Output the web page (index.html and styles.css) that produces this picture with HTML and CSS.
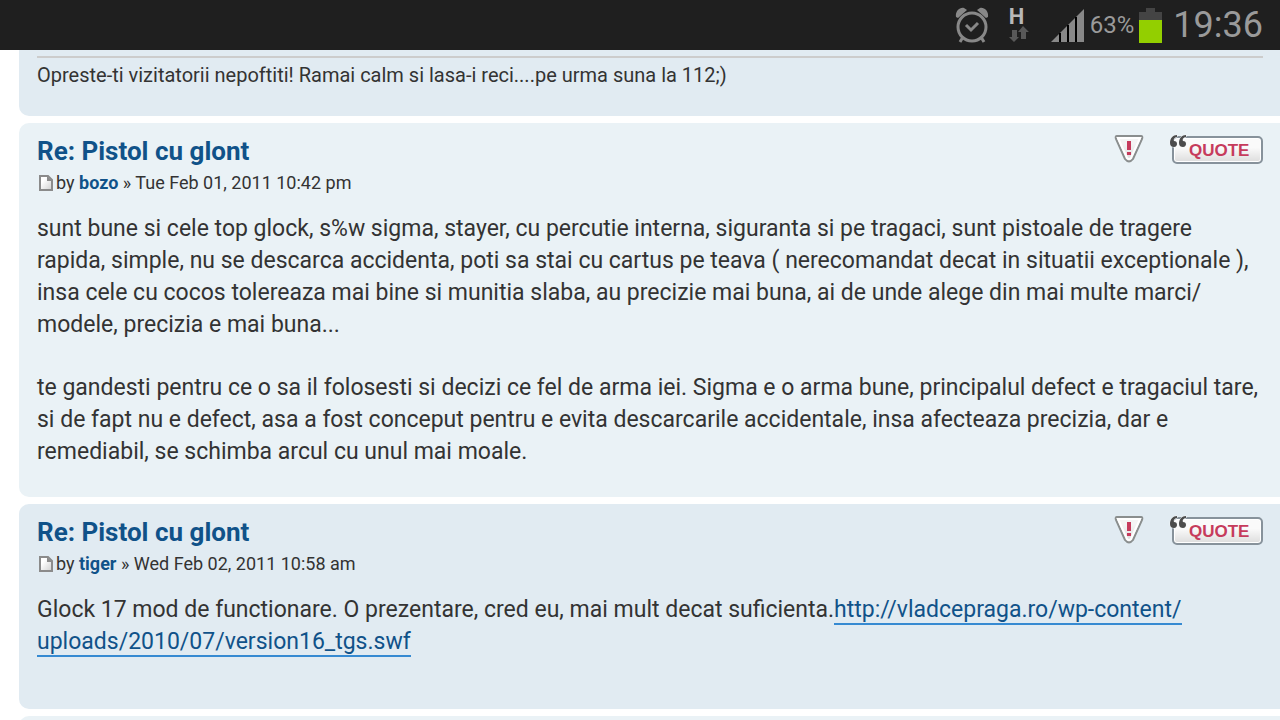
FILE: index.html
```html
<!DOCTYPE html>
<html lang="ro">
<head>
<meta charset="utf-8">
<meta name="viewport" content="width=device-width, initial-scale=1">
<title>Pistol cu glont</title>
<link rel="stylesheet" href="styles.css">
</head>
<body>
<svg class="defs" width="0" height="0" aria-hidden="true">
  <defs>
    <linearGradient id="shade" x1="0" y1="0" x2="0" y2="1">
      <stop offset="0.3" stop-color="#f4f4f4"/><stop offset="1" stop-color="#dcdcdc"/>
    </linearGradient>
    <linearGradient id="paper" x1="0" y1="0" x2="1" y2="1">
      <stop offset="0.3" stop-color="#ffffff"/><stop offset="1" stop-color="#cfcfcf"/>
    </linearGradient>
    <symbol id="report" viewBox="0 0 30 29">
      <path d="M3 1H27Q29 1 28 4L19 24Q15 29 11 24L2 4Q1 1 3 1Z" fill="url(#shade)" stroke="#8a8e8e" stroke-width="2"/>
      <path d="M4 3H26L17 23Q15 25 13 23Z" fill="none" stroke="#ffffff" stroke-width="2"/>
      <path d="M13 6H17V15H13Z M13 17H17V20H13Z" fill="#c63b5c"/>
    </symbol>
    <symbol id="marks" viewBox="0 0 18 15">
      <path id="mark" d="M8 1C4 1 1 4 1 9C1 12 3 13 5 13C7 13 8 11 8 10C8 8 7 7 5 7C4 5 6 3 8 3Z" fill="#4c4c4c" stroke="#f4f6f7" stroke-width="1" paint-order="stroke"/>
      <use href="#mark" x="9"/>
    </symbol>
    <symbol id="page" viewBox="0 0 14 16">
      <path d="M1 1H9L13 5V15H1Z" fill="url(#paper)" stroke="#8b8b8b" stroke-width="2"/>
      <path d="M8 1V6H13Z" fill="#8b8b8b"/>
    </symbol>
  </defs>
</svg>

<header class="status">
  <svg class="alarm" viewBox="0 0 34 36" role="img" aria-label="Alarm">
    <g fill="none" stroke="#888888">
      <circle cx="17" cy="20" r="14" stroke-width="3"/>
      <path d="M11 18L16 23L23 16" stroke-width="3"/>
      <path d="M8 30L5 35M26 30L29 35" stroke-width="3"/>
    </g>
    <path d="M1 10C0 4 5 0 9 1L12 3L3 11Z M33 10C34 4 29 0 25 1L22 3L31 11Z" fill="#888888"/>
  </svg>
  <div class="network">
    <span class="network-type">H</span>
    <svg class="arrows" viewBox="0 0 20 16" aria-hidden="true">
      <path d="M3 4H8V11H10L5 16L0 11H3Z M12 13V6H9L14 0L20 6H17V13Z" fill="#595959"/>
    </svg>
  </div>
  <svg class="signal" viewBox="0 0 33 33" role="img" aria-label="Signal">
    <path d="M0 33L33 0V33Z" fill="#888888"/>
    <path d="M9 24V33M17 16V33M25 8V33" stroke="#000000" stroke-width="2"/>
  </svg>
  <span class="percent">63%</span>
  <svg class="battery" viewBox="0 0 23 35" role="img" aria-label="Battery">
    <path d="M7 0H16V4H23V12H0V4H7Z" fill="#444444"/>
    <path d="M0 12H23V35H0Z" fill="#93cf00"/>
  </svg>
  <time class="clock">19:36</time>
</header>

<main class="topic">
  <article class="post shaded first">
    <p class="signature">Opreste-ti vizitatorii nepoftiti! Ramai calm si lasa-i reci....pe urma suna la 112;)</p>
  </article>

  <article class="post">
    <div class="head">
      <h2 class="title"><a href="#p2" id="p2">Re: Pistol cu glont</a></h2>
      <div class="actions">
        <a class="report" href="#report" aria-label="Report this post"><svg viewBox="0 0 30 29"><use href="#report"/></svg></a>
        <a class="quote" href="#quote"><svg class="marks" aria-hidden="true"><use href="#marks"/></svg>QUOTE</a>
      </div>
    </div>
    <p class="author"><svg class="page" aria-hidden="true"><use href="#page"/></svg>by <a href="#bozo">bozo</a> » Tue Feb 01, 2011 10:42 pm</p>
    <div class="content">
      <p>sunt bune si cele top glock, s%w sigma, stayer, cu percutie interna, siguranta si pe tragaci, sunt pistoale de tragere<br>rapida, simple, nu se descarca accidenta, poti sa stai cu cartus pe teava ( nerecomandat decat in situatii exceptionale ),<br>insa cele cu cocos tolereaza mai bine si munitia slaba, au precizie mai buna, ai de unde alege din mai multe marci/<br>modele, precizia e mai buna...</p>
      <p>te gandesti pentru ce o sa il folosesti si decizi ce fel de arma iei. Sigma e o arma bune, principalul defect e tragaciul tare,<br>si de fapt nu e defect, asa a fost conceput pentru e evita descarcarile accidentale, insa afecteaza precizia, dar e<br>remediabil, se schimba arcul cu unul mai moale.</p>
    </div>
  </article>

  <article class="post shaded">
    <div class="head">
      <h2 class="title"><a href="#p3" id="p3">Re: Pistol cu glont</a></h2>
      <div class="actions">
        <a class="report" href="#report" aria-label="Report this post"><svg viewBox="0 0 30 29"><use href="#report"/></svg></a>
        <a class="quote" href="#quote"><svg class="marks" aria-hidden="true"><use href="#marks"/></svg>QUOTE</a>
      </div>
    </div>
    <p class="author"><svg class="page" aria-hidden="true"><use href="#page"/></svg>by <a href="#tiger">tiger</a> » Wed Feb 02, 2011 10:58 am</p>
    <div class="content last">
      <p>Glock 17 mod de functionare. O prezentare, cred eu, mai mult decat suficienta.<a class="link" href="#video">http://vladcepraga.ro/wp-content/<br>uploads/2010/07/version16_tgs.swf</a></p>
    </div>
  </article>

  <article class="post"></article>
</main>
</body>
</html>
```

FILE: styles.css
```css
* { box-sizing: border-box; }
body {
  display: flex;
  flex-direction: column;
  margin: 0;
  height: 100vh;
  overflow: hidden;
  background: #ffffff;
  color: #333333;
  font-family: Roboto, "Noto Sans", sans-serif;
}
a { color: #105289; text-decoration: none; }
p, h2 { margin: 0; }
svg { display: block; }
.defs { position: absolute; }

.status {
  display: flex;
  flex: none;
  align-items: center;
  justify-content: flex-end;
  height: 50px;
  padding-right: 17px;
  background: #1f1f1f;
  color: #9a9a9a;
}
.alarm { width: 34px; height: 36px; margin-right: 20px; }
.network { width: 24px; margin-right: 18px; }
.network-type {
  display: block;
  color: #b8b8b8;
  font-size: 22px;
  font-weight: 700;
  line-height: 18px;
}
.arrows { width: 20px; height: 16px; }
.signal { width: 33px; height: 33px; margin-right: 6px; }
.percent { margin-right: 5px; font-size: 24px; }
.battery { width: 23px; height: 35px; margin-right: 11px; }
.clock { font-size: 36px; line-height: 48px; }

.topic {
  display: flex;
  flex: 1;
  flex-direction: column;
  gap: 7px;
  min-height: 0;
  padding-left: 19px;
  overflow: hidden;
}
.post {
  flex: none;
  padding: 12px 17px 29px 18px;
  border-radius: 10px 0 0 10px;
  background: #eaf2f6;
}
.shaded { background: #e1ebf2; }
.first {
  padding-top: 6px;
  border-top-left-radius: 0;
}
.signature {
  padding-top: 5px;
  border-top: 2px solid #cccccc;
  font-size: 20px;
  line-height: 24px;
}
.head { display: flex; justify-content: space-between; }
.title { font-size: 26px; line-height: 32px; }
.actions { display: flex; gap: 28px; }
.report svg { width: 30px; height: 29px; }
.quote {
  position: relative;
  height: 28px;
  width: 91px;
  margin-top: 1px;
  padding-left: 15px;
  border: 2px solid #87929b;
  border-radius: 5px;
  background: linear-gradient(#fafafa 40%, #dddddd);
  box-shadow: inset 0 0 0 1px #ffffff;
  color: #c63b5c;
  font: 700 17px/25px "Liberation Sans", Arial, sans-serif;
}
.marks {
  position: absolute;
  top: -4px;
  left: -5px;
  width: 18px;
  height: 15px;
}
.author {
  display: flex;
  align-items: center;
  padding-left: 2px;
  font-size: 18px;
  line-height: 32px;
  white-space: pre;
}
.author a { font-weight: 700; }
.page { width: 14px; height: 16px; margin-right: 3px; }
.content {
  display: flex;
  flex-direction: column;
  gap: 31px;
  padding-top: 14px;
  font-size: 23px;
  line-height: 32px;
  white-space: nowrap;
}
.last { padding-bottom: 22px; }
.link { border-bottom: 2px solid #368ad2; }
```
